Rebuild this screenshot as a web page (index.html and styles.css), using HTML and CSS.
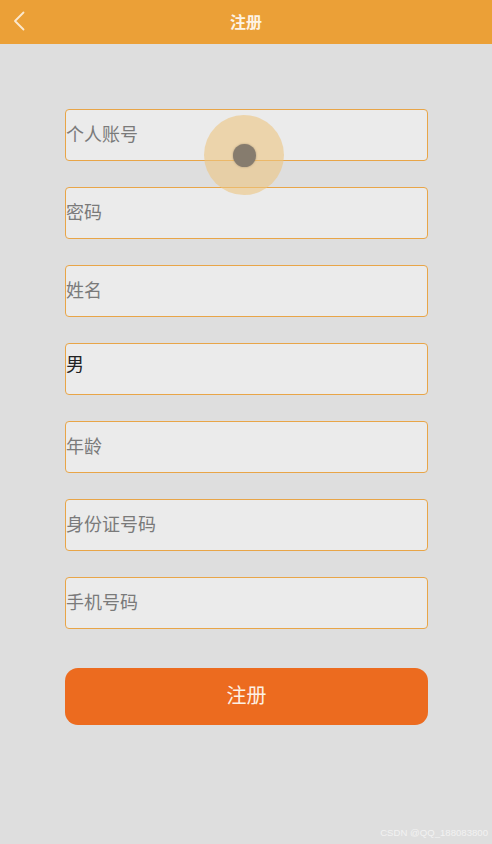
FILE: index.html
```html
<!DOCTYPE html>
<html lang="zh-CN">
<head>
    <meta charset="UTF-8">
    <meta name="viewport" content="width=device-width, initial-scale=1.0">
    <title>注册</title>
    <link rel="stylesheet" href="styles.css">
</head>
<body>
    <header class="top-bar">
        <a class="back" href="#">
            <svg width="12" height="20" viewBox="0 0 12 20">
                <path d="M10.5 1.5 L2 10 L10.5 18.5" fill="none" stroke="#fbe9cf" stroke-width="1.8" stroke-linecap="round" stroke-linejoin="round"/>
            </svg>
        </a>
        <h1>注册</h1>
        <span class="spacer"></span>
    </header>

    <form class="register-form">
        <input class="field" type="text" placeholder="个人账号">
        <input class="field" type="password" placeholder="密码">
        <input class="field" type="text" placeholder="姓名">
        <input class="field field-value" type="text" value="男">
        <input class="field" type="text" placeholder="年龄">
        <input class="field" type="text" placeholder="身份证号码">
        <input class="field" type="text" placeholder="手机号码">
        <button class="submit" type="button">注册</button>
    </form>

    <!-- touch indicator from the device recording -->
    <div class="touch"><div class="touch-dot"></div></div>

    <div class="watermark">CSDN @QQ_188083800</div>
</body>
</html>
```

FILE: styles.css
```css
/* Global styles */
body {
    font-family: "Noto Sans CJK SC", "Noto Sans", sans-serif;
    margin: 0;
    padding: 0;
    background-color: #dedede;
    color: #333;
    min-height: 844px;
    position: relative;
}

.top-bar {
    background-color: #eba037;
    height: 44px;
    display: flex;
    align-items: center;
    justify-content: space-between;
    padding: 0 13px;
    box-sizing: border-box;
}

.top-bar .back {
    display: flex;
    width: 30px;
    margin-top: -2px;
}

.top-bar h1 {
    font-size: 16px;
    font-weight: 700;
    color: #fdf3e4;
    margin: -2px 0 0;
}

.top-bar .spacer {
    width: 30px;
}

.register-form {
    width: 363px;
    margin: 65px 0 0 65px;
    display: flex;
    flex-direction: column;
    gap: 26px;
}

.field {
    height: 52px;
    box-sizing: border-box;
    border: 1px solid #e8a548;
    border-radius: 4px;
    background-color: #ebebeb;
    padding: 0 0 4px 0;
    font-family: inherit;
    font-size: 18px;
    color: #222;
    outline: none;
}

.field::placeholder {
    color: #7a7a7a;
}

.field-value {
    padding-bottom: 13px;
}

.submit {
    margin-top: 13px;
    height: 57px;
    border: none;
    border-radius: 13px;
    background-color: #ec6b1f;
    color: #fdf0e4;
    font-family: inherit;
    font-size: 20px;
    padding: 0 0 5px;
}

.touch {
    position: absolute;
    left: 204px;
    top: 115px;
    width: 80px;
    height: 80px;
    border-radius: 50%;
    background-color: rgba(236, 196, 128, 0.6);
    display: flex;
    align-items: center;
    justify-content: center;
}

.touch-dot {
    width: 23px;
    height: 23px;
    border-radius: 50%;
    background-color: #867c6e;
    box-shadow: 0 0 2px rgba(90, 80, 70, 0.5);
}

.watermark {
    position: absolute;
    right: 4px;
    bottom: 6px;
    font-family: "Liberation Sans", Arial, sans-serif;
    font-size: 9.6px;
    color: #f2f2f2;
}
```
